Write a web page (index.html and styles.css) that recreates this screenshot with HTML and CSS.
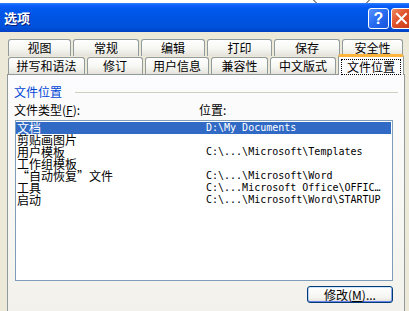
FILE: index.html
```html
<!DOCTYPE html>
<html lang="zh-CN">
<head>
<meta charset="utf-8">
<title>选项</title>
<link rel="stylesheet" href="styles.css">
</head>
<body>
<div class="topstrip">
  <svg width="409" height="3" viewBox="0 0 409 3"><path d="M313.5 0 L316.5 3 M369.5 0 L366.5 3" stroke="#222" stroke-width="1" fill="none"/></svg>
</div>
<div class="titlebar">
  <span class="title">选项</span>
  <div class="tbtns">
    <span class="tbtn help">?</span>
    <span class="tbtn close"><svg width="13" height="13" viewBox="0 0 13 13"><path d="M2 2 L11 11 M11 2 L2 11" stroke="#fff" stroke-width="2" stroke-linecap="square"/></svg></span>
  </div>
</div>
<div class="tabs">
  <div class="tabrow row1">
    <div class="tab">视图</div>
    <div class="tab">常规</div>
    <div class="tab">编辑</div>
    <div class="tab">打印</div>
    <div class="tab">保存</div>
    <div class="tab">安全性</div>
  </div>
  <div class="tabrow row2">
    <div class="tab">拼写和语法</div>
    <div class="tab">修订</div>
    <div class="tab">用户信息</div>
    <div class="tab">兼容性</div>
    <div class="tab">中文版式</div>
    <div class="tab sel"><span class="focus">文件位置</span></div>
  </div>
</div>
<div class="panel">
  <div class="group">文件位置</div>
  <div class="labels">
    <span class="lab1">文件类型(<u>F</u>):</span>
    <span class="lab2">位置:</span>
  </div>
  <div class="list">
    <div class="row selected"><span class="name">文档</span><span class="path">D:\My Documents</span></div>
    <div class="row"><span class="name">剪贴画图片</span><span class="path"></span></div>
    <div class="row"><span class="name">用户模板</span><span class="path">C:\...\Microsoft\Templates</span></div>
    <div class="row"><span class="name">工作组模板</span><span class="path"></span></div>
    <div class="row"><span class="name">“自动恢复”文件</span><span class="path">C:\...\Microsoft\Word</span></div>
    <div class="row"><span class="name">工具</span><span class="path">C:\...Microsoft Office\OFFIC…</span></div>
    <div class="row"><span class="name">启动</span><span class="path">C:\...\Microsoft\Word\STARTUP</span></div>
  </div>
  <div class="actions">
    <button class="btn">修改(<u>M</u>)...</button>
  </div>
</div>
</body>
</html>
```
FILE: styles.css
```css
html, body {
  margin: 0;
  padding: 0;
}
body {
  width: 409px;
  height: 311px;
  overflow: hidden;
  background: #ECE9D8;
  font-family: "Noto Sans CJK SC", "Noto Sans", sans-serif;
  font-size: 12px;
  color: #000;
}
.topstrip {
  height: 3px;
  background: #fff;
  overflow: hidden;
}
.topstrip svg {
  display: block;
}
.titlebar {
  height: 29px;
  display: flex;
  justify-content: space-between;
  align-items: flex-start;
  padding-left: 4px;
  background: linear-gradient(to bottom, #3B8CFF 0, #1A6DFF 1px, #0A5DF6 3px, #0058EE 6px, #0054E3 50%, #0050DA 85%, #0041C2 100%);
}
.title {
  color: #fff;
  font-weight: bold;
  font-size: 13px;
  line-height: 29px;
  text-shadow: 1px 1px 0 #0A1E78;
}
.tbtns {
  display: flex;
  gap: 2px;
  margin-top: 5px;
  margin-right: -3px;
}
.tbtn {
  box-sizing: border-box;
  width: 21px;
  height: 21px;
  border: 1px solid #fff;
  border-radius: 3px;
  display: flex;
  align-items: center;
  justify-content: center;
}
.help {
  background: linear-gradient(135deg, #5C94FF 0%, #2A6EF2 45%, #1552DA 100%);
  color: #fff;
  font-family: "Liberation Sans", sans-serif;
  font-weight: bold;
  font-size: 16px;
  line-height: 19px;
}
.close {
  background: linear-gradient(135deg, #F08A60 0%, #E0522C 45%, #C83B16 100%);
}
.tabs {
  padding: 7px 0 0 8px;
}
.tabrow {
  display: flex;
  gap: 2px;
  height: 17px;
}
.row2 {
  margin-top: 1px;
}
.tab {
  box-sizing: border-box;
  height: 17px;
  border: 1px solid #919B9C;
  border-bottom: none;
  border-radius: 3px 3px 0 0;
  background: linear-gradient(to bottom, #FFFFFF 0, #F6F6F2 55%, #E4E2DA 100%);
  display: flex;
  align-items: center;
  justify-content: center;
  line-height: 12px;
  white-space: nowrap;
}
.row1 .tab:nth-child(1) { width: 63px; }
.row1 .tab:nth-child(2) { width: 66px; }
.row1 .tab:nth-child(3) { width: 64px; }
.row1 .tab:nth-child(4) { width: 65px; }
.row1 .tab:nth-child(5) { width: 66px; }
.row1 .tab:nth-child(6) { width: 61px; }
.row2 .tab:nth-child(1) { width: 77px; }
.row2 .tab:nth-child(2) { width: 56px; }
.row2 .tab:nth-child(3) { width: 64px; }
.row2 .tab:nth-child(4) { width: 57px; }
.row2 .tab:nth-child(5) { width: 66px; }
.row2 .tab:nth-child(6) { width: 66px; }
.tab.sel {
  position: relative;
  z-index: 1;
  height: 21px;
  margin-top: -3px;
  border-top: 3px solid #FFB43C;
  background: #FCFCFE;
  padding-top: 1px;
}
.focus {
  outline: 1px dotted #000;
  outline-offset: 0;
  padding: 1px 5px;
  line-height: 12px;
}
.panel {
  box-sizing: border-box;
  margin-left: 7px;
  width: 398px;
  height: 240px;
  border: 1px solid #919B9C;
  border-bottom: none;
  background: linear-gradient(to bottom, #FCFCFE 0%, #F8F8F5 50%, #F2F1EB 100%);
  padding: 11px 6px 0 6px;
}
.group {
  display: flex;
  align-items: center;
  gap: 13px;
  height: 12px;
  line-height: 12px;
  color: #0046D5;
}
.group::after {
  content: "";
  flex: 1;
  height: 1px;
  background: #D0D0BF;
}
.labels {
  display: flex;
  margin-top: 6px;
  height: 12px;
  line-height: 12px;
}
.lab1 {
  width: 185px;
}
.list {
  box-sizing: border-box;
  margin: 4px 0 0 1px;
  width: 378px;
  height: 161px;
  border: 1px solid #7F9DB9;
  background: #fff;
  padding: 1px 1px 1px 0;
}
.row {
  display: grid;
  grid-template-columns: 190px 1fr;
  height: 12px;
  line-height: 12px;
  white-space: nowrap;
}
.name {
  padding-left: 1px;
}
.path {
  font-family: "DejaVu Sans Mono", "Liberation Mono", monospace;
  font-size: 10px;
  line-height: 12px;
}
.row.selected {
  background: #316AC5;
  color: #fff;
}
.actions {
  display: flex;
  justify-content: flex-end;
  margin-top: 5px;
  padding-right: 5px;
}
.btn {
  box-sizing: border-box;
  width: 86px;
  height: 17px;
  padding: 0;
  border: 1px solid #003C74;
  border-radius: 3px;
  background: linear-gradient(to bottom, #FFFFFF 0%, #F4F4F0 70%, #E3E0D6 100%);
  box-shadow: inset 0 1px 0 #CEE7FF, inset 0 -1px 0 #6982EE, inset 1px 0 0 #B8D0F8, inset -1px 0 0 #8AA4EE;
  font-family: "Noto Sans CJK SC", "Noto Sans", sans-serif;
  font-size: 12px;
  line-height: 13px;
  color: #000;
}
```
